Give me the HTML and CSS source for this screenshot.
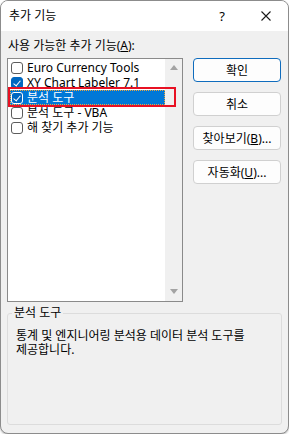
FILE: index.html
```html
<!DOCTYPE html>
<html lang="ko">
<head>
    <meta charset="UTF-8">
    <title>추가 기능</title>
    <link rel="stylesheet" href="styles.css">
</head>
<body>
<div class="window">
    <div class="titlebar">
        <span class="title">추가 기능</span>
        <span class="tb-btn help">?</span>
        <span class="tb-btn close">
            <svg width="10" height="10" viewBox="0 0 10 10"><path d="M0.5 0.5 L9.5 9.5 M9.5 0.5 L0.5 9.5" stroke="#1a1a1a" stroke-width="1.1" fill="none"/></svg>
        </span>
    </div>

    <div class="content">
        <div class="label">사용 가능한 추가 기능(<u>A</u>):</div>

        <div class="main">
            <div class="list">
                <div class="items">
                    <div class="row"><span class="cb"></span>Euro Currency Tools</div>
                    <div class="row"><span class="cb checked"></span>XY Chart Labeler 7.1</div>
                    <div class="row selected"><span class="cb checked"></span>분석 도구</div>
                    <div class="row"><span class="cb"></span>분석 도구 - VBA</div>
                    <div class="row"><span class="cb"></span>해 찾기 추가 기능</div>
                </div>
                <div class="scrollbar">
                    <span class="arrow up"></span>
                    <span class="arrow down"></span>
                </div>
                <div class="highlight-box"></div>
            </div>

            <div class="buttons">
                <div class="btn default">확인</div>
                <div class="btn">취소</div>
                <div class="btn">찾아보기(<u>B</u>)...</div>
                <div class="btn">자동화(<u>U</u>)...</div>
            </div>
        </div>

        <fieldset class="group">
            <legend>분석 도구</legend>
            <p class="desc">통계 및 엔지니어링 분석용 데이터 분석 도구를 제공합니다.</p>
        </fieldset>
    </div>
</div>
</body>
</html>
```

FILE: styles.css
```css
body {
    margin: 0;
    background: #fff;
    font-family: "Noto Sans", "Noto Sans CJK KR", sans-serif;
    font-size: 12px;
    color: #000;
}

.window {
    width: 289px;
    height: 434px;
    box-sizing: border-box;
    border: 1px solid #8c8c8c;
    border-radius: 8px;
    overflow: hidden;
    background: #f0f0f0;
    display: flex;
    flex-direction: column;
    box-shadow: 0 1px 2px rgba(0, 0, 0, 0.25);
}

.titlebar {
    height: 30px;
    background: #fff;
    display: flex;
    align-items: center;
    flex-shrink: 0;
}

.title {
    flex: 1;
    padding-left: 8px;
    line-height: 16px;
}

.tb-btn {
    width: 44px;
    height: 30px;
    display: flex;
    align-items: center;
    justify-content: center;
}

.help {
    font-size: 13px;
}

.content {
    flex: 1;
    display: flex;
    flex-direction: column;
    padding: 0 6px 8px 6px;
}

.label {
    line-height: 16px;
    margin-top: 7px;
    margin-bottom: 4px;
    padding-left: 1px;
}

.main {
    display: flex;
    align-items: flex-start;
}

.list {
    position: relative;
    width: 176px;
    height: 244px;
    box-sizing: border-box;
    border: 1px solid #8a8a8a;
    background: #fff;
    display: flex;
}

.items {
    flex: 1;
    padding: 1px 0 0 2px;
}

.row {
    height: 15px;
    line-height: 14px;
    display: flex;
    align-items: center;
    padding-left: 1px;
    white-space: nowrap;
    box-sizing: border-box;
    overflow: hidden;
}

.row.selected {
    background: #0078d7;
    color: #fff;
    outline: 1px dotted #e9a640;
    outline-offset: -1px;
}

.cb {
    width: 12px;
    height: 12px;
    box-sizing: border-box;
    border: 1px solid #5c5c5c;
    border-radius: 3px;
    background: #fff;
    margin-right: 4px;
    flex-shrink: 0;
    position: relative;
}

.cb.checked {
    background: #0067c0;
    border-color: #0067c0;
}

.cb.checked::after {
    content: "";
    position: absolute;
    left: 3px;
    top: 1px;
    width: 3px;
    height: 6px;
    border: solid #fff;
    border-width: 0 1px 1px 0;
    transform: rotate(40deg);
}

.row.selected .cb.checked {
    border-color: #fff;
}

.scrollbar {
    width: 17px;
    background: #f0f0f0;
    display: flex;
    flex-direction: column;
    justify-content: space-between;
    align-items: center;
    padding: 6px 0 7px 0;
    box-sizing: border-box;
}

.arrow {
    width: 0;
    height: 0;
    border-left: 4px solid transparent;
    border-right: 4px solid transparent;
}

.arrow.up {
    border-bottom: 5px solid #a3a3a3;
}

.arrow.down {
    border-top: 5px solid #a3a3a3;
}

.highlight-box {
    position: absolute;
    left: 0;
    top: 28px;
    width: 168px;
    height: 20px;
    box-sizing: border-box;
    border: 2px solid #e81123;
}

.buttons {
    margin-left: 10px;
    display: flex;
    flex-direction: column;
    gap: 10px;
}

.btn {
    width: 88px;
    height: 24px;
    box-sizing: border-box;
    border: 1px solid #d0d0d0;
    border-radius: 4px;
    background: #fdfdfd;
    display: flex;
    align-items: center;
    justify-content: center;
    white-space: nowrap;
}

.btn.default {
    border-color: #0f6cbd;
}

.group {
    flex: 1;
    margin: 3px 0 0 0;
    padding: 0 8px 0 8px;
    border: 1px solid #dcdcdc;
    border-radius: 3px;
    min-width: 0;
}

.group legend {
    padding: 0 2px;
    margin-left: -4px;
    line-height: 16px;
}

.desc {
    margin: 8px 0 0 0;
    line-height: 14px;
    word-break: keep-all;
}
```
